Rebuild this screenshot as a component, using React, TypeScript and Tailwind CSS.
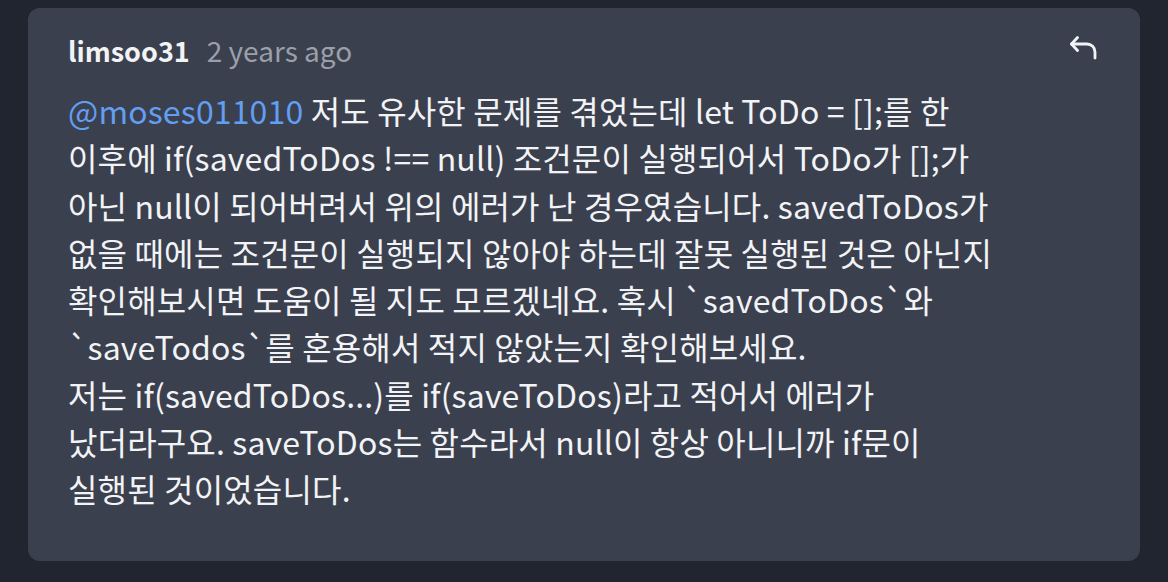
export default function App() {
  const lines = [
    <>
      <span className="text-[#629ef1]">@moses011010</span> 저도 유사한 문제를 겪었는데 let ToDo = [];를 한
    </>,
    <>이후에 if(savedToDos !== null) 조건문이 실행되어서 ToDo가 [];가</>,
    <>아닌 null이 되어버려서 위의 에러가 난 경우였습니다. savedToDos가</>,
    <>없을 때에는 조건문이 실행되지 않아야 하는데 잘못 실행된 것은 아닌지</>,
    <>확인해보시면 도움이 될 지도 모르겠네요. 혹시 `savedToDos`와</>,
    <>`saveTodos`를 혼용해서 적지 않았는지 확인해보세요.</>,
    <>저는 if(savedToDos...)를 if(saveToDos)라고 적어서 에러가</>,
    <>났더라구요. saveToDos는 함수라서 null이 항상 아니니까 if문이</>,
    <>실행된 것이었습니다.</>,
  ];

  return (
    <div
      className="min-h-[582px] w-[1168px] bg-[#21252f] pt-2 pb-[22px]"
      style={{ fontFamily: '"Noto Sans CJK KR", "Noto Sans", sans-serif' }}
    >
      <div className="mx-[28px] rounded-xl bg-[#3b404f] pl-10 pr-10 pt-[22px] pb-[48px]">
        <div className="flex items-center justify-between">
          <div className="flex items-baseline gap-[17px]">
            <span className="text-[27px] font-bold leading-[40px] text-[#f2f3f5]">limsoo31</span>
            <span className="text-[28px] leading-[40px] text-[#9a9fa9]">2 years ago</span>
          </div>
          <svg width="28" height="24" viewBox="0 0 28 24" fill="none" stroke="#f2f3f5" strokeWidth="2.8" strokeLinecap="round" strokeLinejoin="round" className="mr-[2px] -mt-[6px]">
            <path d="M7.5 1.5 1.5 8l6 6.5" />
            <path d="M1.5 8H17a8 8 0 0 1 8 8v6" />
          </svg>
        </div>
        <div className="mt-[16px] text-[32px] tracking-[0.15px] leading-[47.3px] text-[#f2f3f5]">
          {lines.map((l, i) => (
            <div key={i}>{l}</div>
          ))}
        </div>
      </div>
    </div>
  );
}
